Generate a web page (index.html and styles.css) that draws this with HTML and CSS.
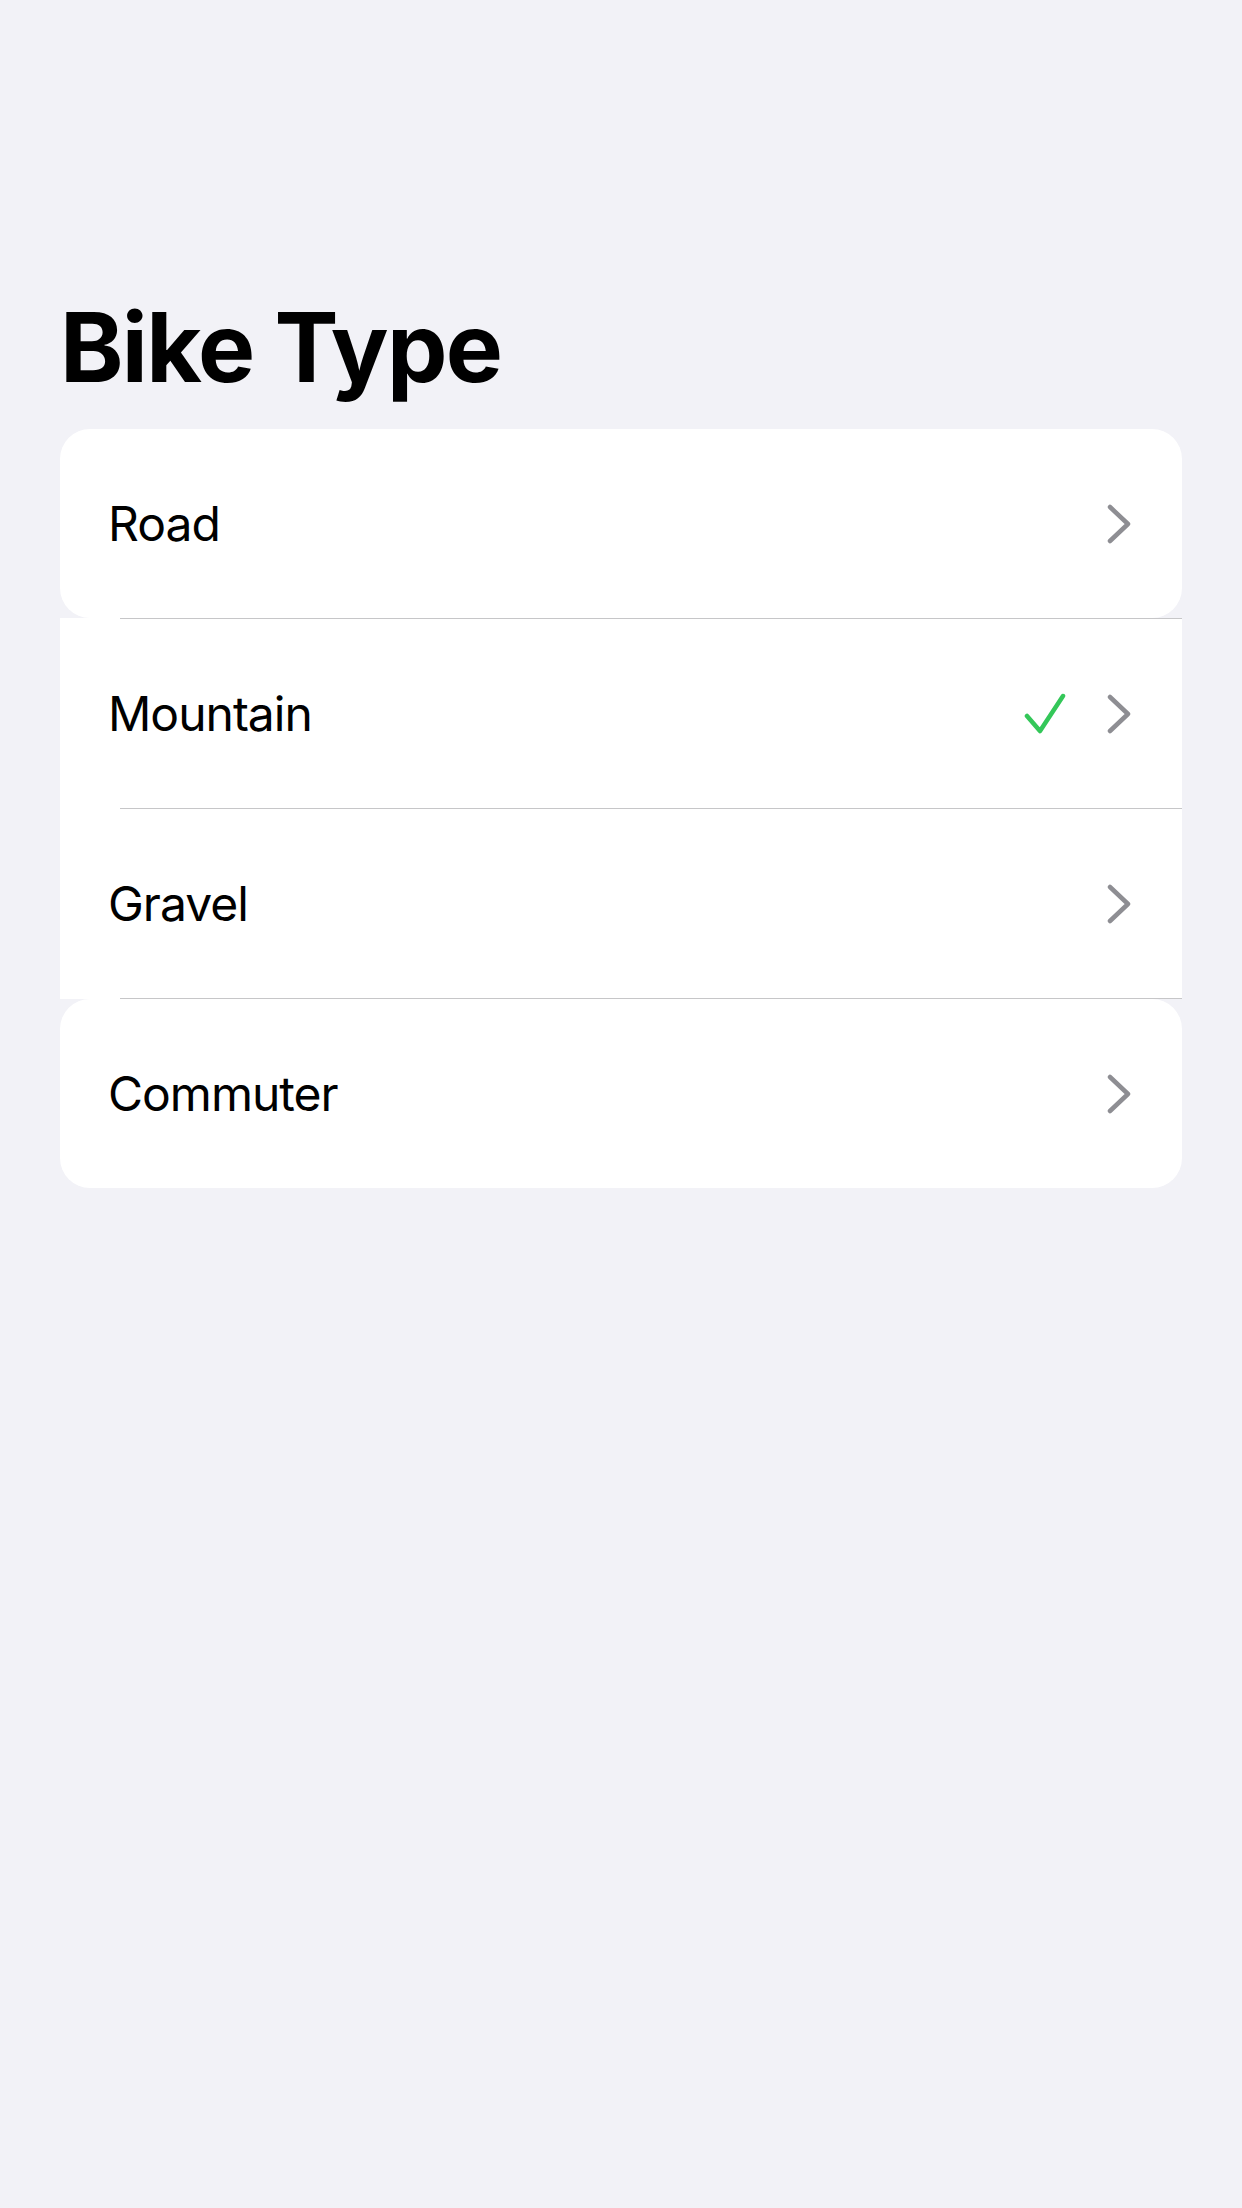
FILE: index.html
```html
<!DOCTYPE html>
<html>
<head>
<meta charset="utf-8">
<link rel="stylesheet" href="styles.css">
</head>
<body>
<main class="page">
  <h1 class="title">Bike Type</h1>
  <ul class="list">
    <li class="row rounded">
      <span class="label">Road</span>
      <span class="accessory">
        <svg class="chevron" width="24" height="40" viewBox="0 0 24 40"><path d="M3 3 L21 20 L3 37" /></svg>
      </span>
    </li>
    <li class="sep"></li>
    <li class="row">
      <span class="label">Mountain</span>
      <span class="accessory">
        <svg class="check" width="42" height="42" viewBox="0 0 42 42"><path d="M3 23 L16 38 L39 3" /></svg>
        <svg class="chevron" width="24" height="40" viewBox="0 0 24 40"><path d="M3 3 L21 20 L3 37" /></svg>
      </span>
    </li>
    <li class="sep"></li>
    <li class="row">
      <span class="label">Gravel</span>
      <span class="accessory">
        <svg class="chevron" width="24" height="40" viewBox="0 0 24 40"><path d="M3 3 L21 20 L3 37" /></svg>
      </span>
    </li>
    <li class="sep"></li>
    <li class="row rounded">
      <span class="label">Commuter</span>
      <span class="accessory">
        <svg class="chevron" width="24" height="40" viewBox="0 0 24 40"><path d="M3 3 L21 20 L3 37" /></svg>
      </span>
    </li>
  </ul>
</main>
</body>
</html>
```

FILE: styles.css
```css
html, body {
  margin: 0;
  padding: 0;
  background: #f2f2f7;
}
body {
  width: 1242px;
  min-height: 2208px;
  font-family: Inter, "Noto Sans", sans-serif;
  color: #000;
}
.page {
  padding: 299px 60px 0 60px;
}
.title {
  margin: 0 0 34px 0;
  font-size: 96px;
  line-height: 96px;
  font-weight: 700;
  letter-spacing: -1.7px;
  padding-left: 0;
}
.list {
  list-style: none;
  margin: 0;
  padding: 0;
  display: flex;
  flex-direction: column;
}
.row {
  height: 189px;
  background: #fff;
  display: flex;
  align-items: center;
  justify-content: space-between;
  padding: 0 51px 0 48px;
}
.row.rounded {
  border-radius: 30px;
}
.label {
  font-size: 48px;
  font-weight: 400;
  letter-spacing: -1px;
}
.accessory {
  display: flex;
  align-items: center;
  gap: 40px;
}
.check {
  margin-right: 1px;
}
.chevron path {
  fill: none;
  stroke: #8e8e93;
  stroke-width: 4.5;
  stroke-linecap: round;
  stroke-linejoin: round;
}
.check path {
  fill: none;
  stroke: #34c759;
  stroke-width: 4.5;
  stroke-linecap: round;
  stroke-linejoin: round;
}
.sep {
  height: 1px;
  background: linear-gradient(to right, #fff 60px, #c6c6c8 60px);
}
```
